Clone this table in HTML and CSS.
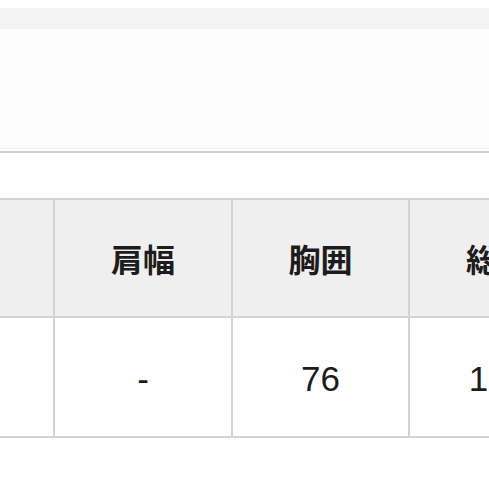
FILE: index.html
```html
<!DOCTYPE html>
<html lang="ja">
<head>
<meta charset="utf-8">
<link rel="stylesheet" href="styles.css">
</head>
<body>
<div class="page">
  <div class="topbar"></div>
  <div class="panel"></div>
  <div class="rule"></div>
  <div class="sizes">
    <div class="cell head"></div>
    <div class="cell head">肩幅</div>
    <div class="cell head">胸囲</div>
    <div class="cell head">総丈</div>
    <div class="cell data"></div>
    <div class="cell data">-</div>
    <div class="cell data">76</div>
    <div class="cell data">150</div>
  </div>
</div>
</body>
</html>
```

FILE: styles.css
```css
html, body {
  margin: 0;
  padding: 0;
  background: #ffffff;
  overflow: hidden;
}
.page {
  width: 489px;
  height: 489px;
  overflow: hidden;
  padding-top: 8px;
  box-sizing: border-box;
}
.topbar {
  height: 21px;
  background: #f3f3f3;
}
.panel {
  height: 119px;
  background: #fdfdfd;
  border-bottom: 1px solid #efefef;
}
.rule {
  margin-top: 2px;
  height: 2px;
  background: #d0d0d0;
}
.sizes {
  margin-top: 45px;
  margin-left: -125px;
  width: max-content;
  display: grid;
  grid-template-columns: 176px 176px 175px 176px;
  grid-template-rows: 116px 118px;
  gap: 2px;
  padding: 2px;
  background: #d3d3d3;
}
.cell {
  display: flex;
  align-items: center;
  justify-content: center;
  color: #1c1c1c;
}
.head {
  background: #efefef;
  font-family: "Noto Sans CJK JP", "Noto Sans", sans-serif;
  font-weight: 700;
  font-size: 32px;
}
.data {
  background: #ffffff;
  font-family: "Liberation Sans", Arial, sans-serif;
  font-size: 35px;
  padding-top: 4px;
}
```
